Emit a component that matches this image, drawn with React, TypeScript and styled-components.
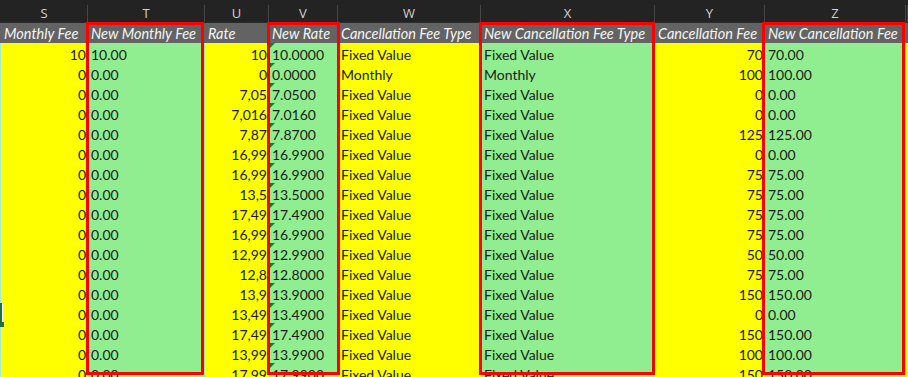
import React from "react";
import styled, { createGlobalStyle, css } from "styled-components";

const GlobalStyle = createGlobalStyle`
  html, body { margin: 0; padding: 0; background: #ffffff; overflow: hidden; }
  #root { width: 908px; height: 377px; overflow: hidden; }
`;

const COLS = "1px 87px 117px 64px 69px 143px 174px 110px 141px 1fr";

const Sheet = styled.div`
  position: relative;
  width: 908px;
  height: 377px;
  overflow: hidden;
  font-family: Lato, "Liberation Sans", sans-serif;
`;

const LetterRow = styled.div`
  display: grid;
  grid-template-columns: ${COLS};
  height: 22px;
  background: #232323;
  border-bottom: 1px solid #2c2c2c;
`;

const Letter = styled.div`
  margin-top: 5px;
  display: flex;
  align-items: center;
  justify-content: center;
  border-right: 1px solid #454545;
  color: #d2d2d2;
  font-family: "Open Sans", "Noto Sans", sans-serif;
  font-size: 13px;
  line-height: 17px;
  &:first-child { border-right: none; }
`;

const HeaderRow = styled.div`
  display: grid;
  grid-template-columns: ${COLS};
  height: 20px;
  background: #636363;
`;

const HeaderCell = styled.div`
  padding: 2px 0 0 3px;
  line-height: 17px;
  font-size: 14.5px;
  font-style: italic;
  color: #f4f4f4;
  white-space: nowrap;
  overflow: hidden;
`;

const DataRow = styled.div`
  display: grid;
  grid-template-columns: ${COLS};
  height: 20px;
`;

type Fill = "yellow" | "green";

const Cell = styled.div<{ $fill: Fill; $align?: "left" | "right"; $flag?: boolean }>`
  position: relative;
  background: ${(p) => (p.$fill === "yellow" ? "#ffff00" : "#90ee90")};
  padding: 3px ${(p) => (p.$align === "right" ? "2px" : "0")} 0 ${(p) => (p.$align === "right" ? "0" : "3px")};
  line-height: 17px;
  font-size: 14px;
  color: #1c1c1c;
  text-align: ${(p) => p.$align ?? "left"};
  white-space: nowrap;
  overflow: hidden;
  ${(p) =>
    p.$flag &&
    css`
      &::before {
        content: "";
        position: absolute;
        left: 0;
        top: 0;
        width: 0;
        height: 0;
        border-top: 6px solid #1b7a26;
        border-right: 6px solid transparent;
      }
    `}
`;

const EdgeCell = styled.div<{ $selected?: boolean }>`
  position: relative;
  background: #a4e9d6;
  ${(p) =>
    p.$selected &&
    css`
      overflow: visible;
      &::before {
        content: "";
        position: absolute;
        left: 0;
        top: 0;
        width: 2px;
        height: 20px;
        background: #1e6e42;
        border-right: 1px solid #ffffff;
        z-index: 3;
      }
      &::after {
        content: "";
        position: absolute;
        left: 0;
        top: 19px;
        width: 4px;
        height: 5px;
        background: #1e6e42;
        z-index: 3;
      }
    `}
`;

const RedBox = styled.div<{ $left: number; $width: number }>`
  position: absolute;
  top: 22px;
  left: ${(p) => p.$left}px;
  width: ${(p) => p.$width}px;
  height: 353px;
  box-sizing: border-box;
  border: 3px solid #ff0000;
  pointer-events: none;
  z-index: 2;
`;

type Row = [string, string, string, string, string, string, string, string];

const rows: Row[] = [
  ["10", "10.00", "10", "10.0000", "Fixed Value", "Fixed Value", "70", "70.00"],
  ["0", "0.00", "0", "0.0000", "Monthly", "Monthly", "100", "100.00"],
  ["0", "0.00", "7,05", "7.0500", "Fixed Value", "Fixed Value", "0", "0.00"],
  ["0", "0.00", "7,016", "7.0160", "Fixed Value", "Fixed Value", "0", "0.00"],
  ["0", "0.00", "7,87", "7.8700", "Fixed Value", "Fixed Value", "125", "125.00"],
  ["0", "0.00", "16,99", "16.9900", "Fixed Value", "Fixed Value", "0", "0.00"],
  ["0", "0.00", "16,99", "16.9900", "Fixed Value", "Fixed Value", "75", "75.00"],
  ["0", "0.00", "13,5", "13.5000", "Fixed Value", "Fixed Value", "75", "75.00"],
  ["0", "0.00", "17,49", "17.4900", "Fixed Value", "Fixed Value", "75", "75.00"],
  ["0", "0.00", "16,99", "16.9900", "Fixed Value", "Fixed Value", "75", "75.00"],
  ["0", "0.00", "12,99", "12.9900", "Fixed Value", "Fixed Value", "50", "50.00"],
  ["0", "0.00", "12,8", "12.8000", "Fixed Value", "Fixed Value", "75", "75.00"],
  ["0", "0.00", "13,9", "13.9000", "Fixed Value", "Fixed Value", "150", "150.00"],
  ["0", "0.00", "13,49", "13.4900", "Fixed Value", "Fixed Value", "0", "0.00"],
  ["0", "0.00", "17,49", "17.4900", "Fixed Value", "Fixed Value", "150", "150.00"],
  ["0", "0.00", "13,99", "13.9900", "Fixed Value", "Fixed Value", "100", "100.00"],
  ["0", "0.00", "17,99", "17.9900", "Fixed Value", "Fixed Value", "150", "150.00"],
];

const letters = ["S", "T", "U", "V", "W", "X", "Y", "Z", ""];
const headers = [
  "Monthly Fee",
  "New Monthly Fee",
  "Rate",
  "New Rate",
  "Cancellation Fee Type",
  "New Cancellation Fee Type",
  "Cancellation Fee",
  "New Cancellation Fee",
  "",
];

const boxes = [
  { left: 86, width: 118 },
  { left: 267, width: 73 },
  { left: 479, width: 176 },
  { left: 762, width: 143 },
];

export default function App() {
  return (
    <>
      <GlobalStyle />
      <Sheet>
        <LetterRow>
          <Letter />
          {letters.map((l, i) => (
            <Letter key={i}>{l}</Letter>
          ))}
        </LetterRow>
        <HeaderRow>
          <div />
          {headers.map((h, i) => (
            <HeaderCell key={i}>{h}</HeaderCell>
          ))}
        </HeaderRow>
        {rows.map((r, i) => (
          <DataRow key={i}>
            <EdgeCell $selected={i === 13} />
            <Cell $fill="yellow" $align="right">{r[0]}</Cell>
            <Cell $fill="green">{r[1]}</Cell>
            <Cell $fill="yellow" $align="right">{r[2]}</Cell>
            <Cell $fill="green" $flag>{r[3]}</Cell>
            <Cell $fill="yellow">{r[4]}</Cell>
            <Cell $fill="green">{r[5]}</Cell>
            <Cell $fill="yellow" $align="right">{r[6]}</Cell>
            <Cell $fill="green">{r[7]}</Cell>
            <Cell $fill="yellow" />
          </DataRow>
        ))}
        {boxes.map((b, i) => (
          <RedBox key={i} $left={b.left} $width={b.width} />
        ))}
      </Sheet>
    </>
  );
}
